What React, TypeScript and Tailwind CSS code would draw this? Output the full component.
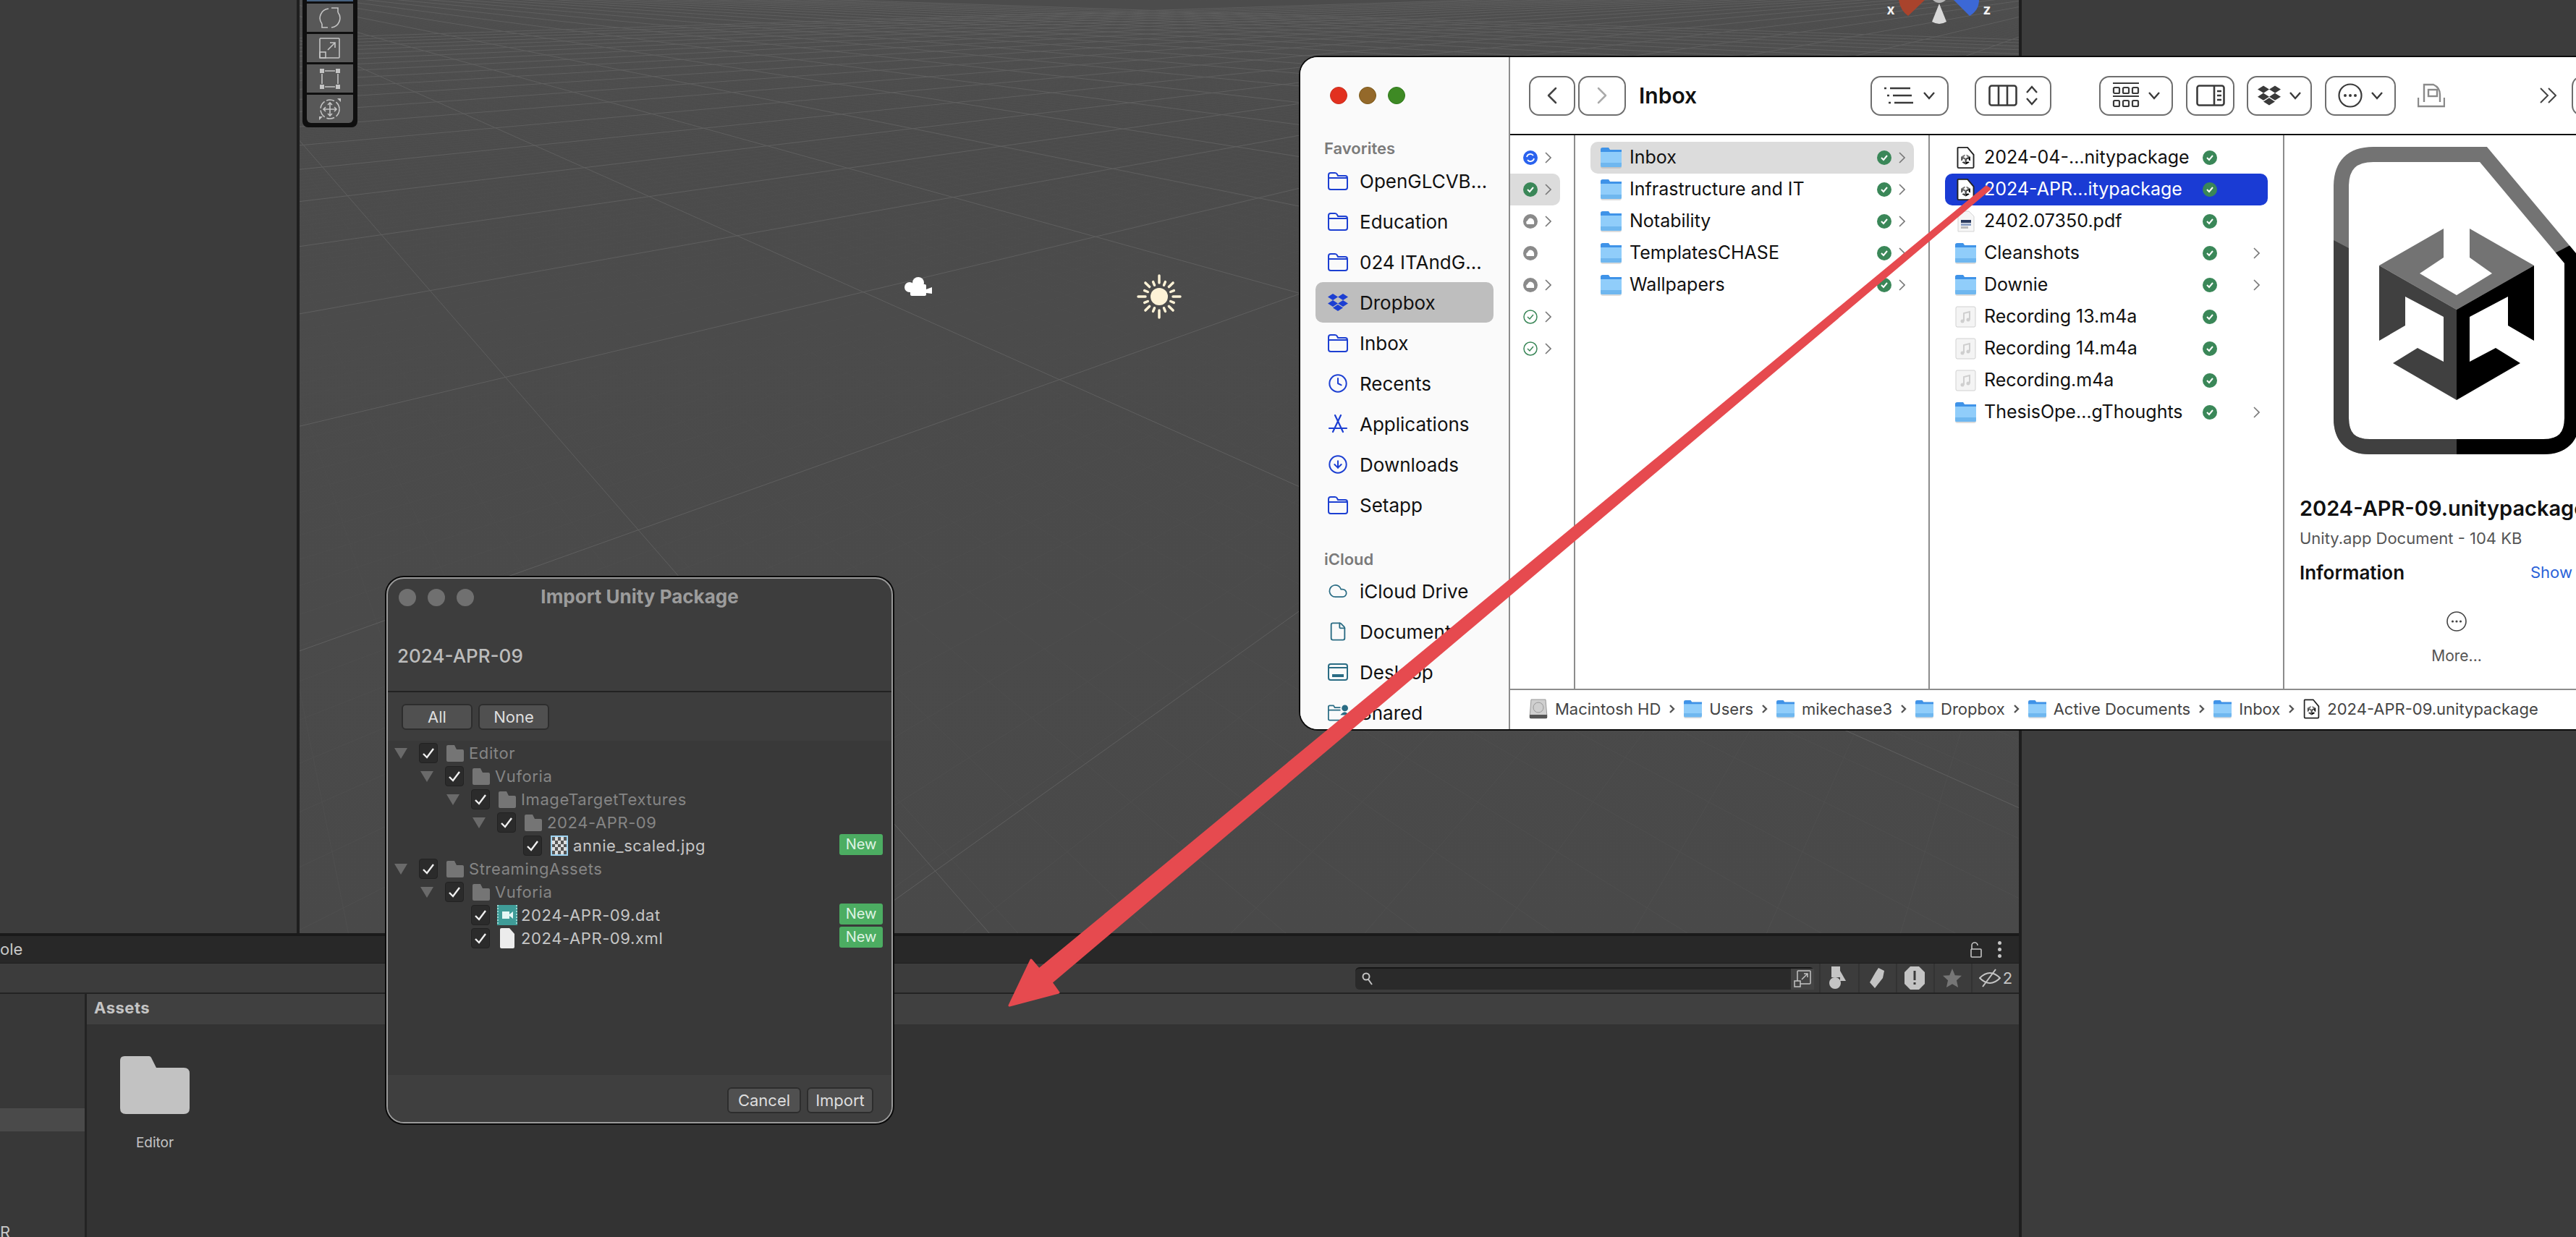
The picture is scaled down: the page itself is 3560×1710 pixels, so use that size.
import { ChevronLeft, ChevronRight, Clock, Cloud, CircleArrowDown, File as FileIcon } from "lucide-react";
import { FaDropbox } from "react-icons/fa";

const BLUE = "#1c3fd2";
const TEAL = "#2a6c84";

/* scene grid: both families of lines run to a vanishing point just above the top edge */
const VP_LEFT = 217;
const VP_RIGHT = 3023;
const VP_Y = -32;
const SCENE_BOTTOM = 1290;

function gridLines(start: number, step: number, count: number) {
  return Array.from({ length: count }, (_, i) => start + step * i);
}

function SceneGrid() {
  const minorA = gridLines(-1.2, 0.14, 200);
  const minorB = gridLines(-1.1, 0.14, 200);
  const majorA = gridLines(-1.87, 1.37, 24);
  const majorB = gridLines(-1.4, 1.4, 24);
  const h = SCENE_BOTTOM - VP_Y;
  return (
    <svg className="absolute inset-0" width="2376" height="1290" viewBox="414 0 2376 1290">
      <defs>
        <linearGradient id="fade" x1="0" y1="0" x2="0" y2="1" gradientUnits="objectBoundingBox">
          <stop offset="0" stopColor="#fff" stopOpacity="0.22" />
          <stop offset="0.35" stopColor="#fff" stopOpacity="0.1" />
          <stop offset="1" stopColor="#fff" stopOpacity="0.3" />
        </linearGradient>
        <mask id="minorMask" maskUnits="userSpaceOnUse" x="414" y="0" width="2376" height="1290">
          <rect x="414" y="0" width="2376" height="1290" fill="url(#fade)" />
        </mask>
      </defs>
      <g stroke="#5c5c5c" strokeWidth="1" mask="url(#minorMask)">
        {minorA.map((c) => (
          <line key={c} x1={VP_LEFT} y1={VP_Y} x2={VP_LEFT + c * h} y2={SCENE_BOTTOM} />
        ))}
        {minorB.map((c) => (
          <line key={c} x1={VP_RIGHT} y1={VP_Y} x2={VP_RIGHT - c * h} y2={SCENE_BOTTOM} />
        ))}
      </g>
      <g stroke="#5f5f5f" strokeWidth="1">
        {majorA.map((c) => (
          <line key={c} x1={VP_LEFT} y1={VP_Y} x2={VP_LEFT + c * h} y2={SCENE_BOTTOM} />
        ))}
        {majorB.map((c) => (
          <line key={c} x1={VP_RIGHT} y1={VP_Y} x2={VP_RIGHT - c * h} y2={SCENE_BOTTOM} />
        ))}
      </g>
      {/* camera gizmo */}
      <g fill="#ffffff">
        <circle cx="1257" cy="397" r="7" />
        <circle cx="1269" cy="391" r="8" />
        <rect x="1258" y="393" width="22" height="16" rx="2" />
        <polygon points="1280,400 1288,397 1288,406 1280,405" />
      </g>
      {/* directional light gizmo */}
      <g stroke="#fdf2d6" strokeLinecap="round" strokeWidth="3.5">
        {Array.from({ length: 16 }, (_, i) => {
          const a = (i * Math.PI) / 8;
          const long = i % 2 === 0;
          const r1 = long ? 19 : 17;
          const r2 = i % 4 === 0 ? 29 : i % 2 === 0 ? 27 : 22;
          return (
            <line
              key={i}
              x1={1602 + r1 * Math.cos(a)}
              y1={410 + r1 * Math.sin(a)}
              x2={1602 + r2 * Math.cos(a)}
              y2={410 + r2 * Math.sin(a)}
            />
          );
        })}
      </g>
      <circle cx="1602" cy="410" r="12" fill="#fdf2d6" />
      {/* orientation gizmo, cut by the top edge */}
      <path d="M2624 0 Q2626 14 2637 22 L2660 0 Z" fill="#a9432c" />
      <path d="M2700 0 L2722 22 Q2735 14 2735 0 Z" fill="#3c68d6" />
      <path d="M2680 5 L2670 30 Q2680 36 2690 30 Z" fill="#d8d8d8" />
      <path d="M2671 0 Q2680 8 2689 0 Z" fill="#b5b5b5" />
      <text x="2613" y="20" fill="#f2f2f2" fontSize="19" fontWeight="700" textAnchor="middle">x</text>
      <text x="2746" y="20" fill="#f2f2f2" fontSize="19" fontWeight="700" textAnchor="middle">z</text>
    </svg>
  );
}

function ToolIcon({ kind }: { kind: "rotate" | "scale" | "rect" | "all" }) {
  return (
    <svg width="32" height="32" viewBox="0 0 32 32" fill="none" stroke="#c4c4c4" strokeWidth="1.6">
      {kind === "rotate" && (
        <>
          <path d="M5 24 A13 13 0 0 1 14 3" />
          <path d="M27 8 A13 13 0 0 1 18 29" />
          <path d="M18 2 H27 V8 M5 24 V29 H13" />
        </>
      )}
      {kind === "scale" && (
        <>
          <rect x="2" y="2" width="27" height="27" rx="1" />
          <rect x="2" y="21" width="8" height="8" />
          <path d="M13 18 L23 8 M16 8 H23 V15" />
        </>
      )}
      {kind === "rect" && (
        <g>
          <path d="M9 5 H23 M9 27 H23 M5 9 V23 M27 9 V23" />
          <g fill="#c4c4c4" stroke="none">
            <rect x="2" y="2" width="6" height="6" />
            <rect x="24" y="2" width="6" height="6" />
            <rect x="2" y="24" width="6" height="6" />
            <rect x="24" y="24" width="6" height="6" />
          </g>
        </g>
      )}
      {kind === "all" && (
        <>
          <circle cx="16" cy="16" r="13" strokeDasharray="11 3" />
          <path d="M16 7 V25 M7 16 H25 M13 10 L16 7 L19 10 M13 22 L16 25 L19 22 M10 13 L7 16 L10 19 M22 13 L25 16 L22 19" />
          <path d="M26 1 H31 V6 Z M1 31 V26 H6 Z" fill="#c4c4c4" stroke="none" />
        </>
      )}
    </svg>
  );
}

function SceneToolbar() {
  const cell = "flex h-[39px] w-[64px] items-center justify-center bg-[#585858]";
  return (
    <div className="absolute left-[4px] top-0 flex w-[76px] flex-col gap-[3px] rounded-b-[8px] bg-[#0f0f0f] px-[6px] pb-[6px]">
      <div className="h-[2px] w-[64px] bg-[#46607f]" />
      <div className={cell}><ToolIcon kind="rotate" /></div>
      <div className={cell}><ToolIcon kind="scale" /></div>
      <div className={cell}><ToolIcon kind="rect" /></div>
      <div className={`${cell} rounded-b-[6px]`}><ToolIcon kind="all" /></div>
    </div>
  );
}

function BottomPanel() {
  const filter = "flex h-[40px] items-center justify-center border-l-2 border-[#333333]";
  return (
    <div className="flex h-[420px] flex-col">
      <div className="h-[4px] shrink-0 bg-[#1a1a1a]" />
      <div className="flex h-[38px] shrink-0 items-center border-b border-[#1e1e1e] bg-[#282828]">
        <span className="text-[22px] text-[#c8c8c8]">ole</span>
        <div className="ml-auto flex items-center gap-[22px] pr-[24px]">
          <svg width="16" height="22" viewBox="0 0 16 22" fill="none" stroke="#c4c4c4" strokeWidth="1.6">
            <path d="M2 10 V5 A4 4 0 0 1 10 5" />
            <rect x="1" y="10" width="14" height="11" rx="1" />
          </svg>
          <div className="flex flex-col gap-[4px]">
            <div className="h-[5px] w-[5px] rounded-full bg-[#c4c4c4]" />
            <div className="h-[5px] w-[5px] rounded-full bg-[#c4c4c4]" />
            <div className="h-[5px] w-[5px] rounded-full bg-[#c4c4c4]" />
          </div>
        </div>
      </div>
      <div className="flex h-[40px] shrink-0 items-center justify-end bg-[#3c3c3c]">
        <div className="flex h-[31px] w-[634px] items-center justify-between rounded-[6px] border-t-2 border-[#171717] bg-[#2a2a2a] pl-[9px]">
          <svg width="16" height="20" viewBox="0 0 16 20" fill="none" stroke="#c4c4c4" strokeWidth="2">
            <circle cx="6" cy="7" r="4.5" />
            <path d="M9 11 L14 18" />
          </svg>
          <div className="flex h-full w-[32px] items-center justify-center bg-[#444444]">
            <svg width="26" height="26" viewBox="0 0 26 26" fill="none" stroke="#c4c4c4" strokeWidth="1.5">
              <rect x="6" y="2" width="18" height="18" rx="1" />
              <rect x="2" y="16" width="8" height="8" fill="#444444" />
              <path d="M12 14 L20 6 M15 6 H20 V11" />
            </svg>
          </div>
        </div>
        <div className={`${filter} ml-[7px] w-[49px]`}>
          <svg width="26" height="32" viewBox="0 0 26 32" fill="#c4c4c4">
            <rect x="4" y="0" width="12" height="15" />
            <polygon points="16,6 24,20 16,20" />
            <circle cx="9" cy="23" r="8" />
          </svg>
        </div>
        <div className={`${filter} ml-[5px] w-[50px]`}>
          <svg width="20" height="28" viewBox="0 0 20 28" fill="#c4c4c4">
            <path d="M12 0 L20 4 L18 14 L7 28 L0 20 L8 6 Z" />
          </svg>
        </div>
        <div className={`${filter} ml-[2px] w-[50px]`}>
          <svg width="28" height="32" viewBox="0 0 28 32">
            <polygon points="8,0 20,0 28,8 28,24 20,32 8,32 0,24 0,8" fill="#c4c4c4" />
            <rect x="12.5" y="6" width="3" height="13" fill="#3c3c3c" />
            <rect x="12.5" y="22" width="3" height="3" fill="#3c3c3c" />
          </svg>
        </div>
        <div className={`${filter} ml-[2px] w-[50px]`}>
          <svg width="26" height="26" viewBox="0 0 24 24" fill="#767676">
            <polygon points="12,0 15.5,8.5 24,9 17.5,15 19.5,24 12,19.5 4.500,24 6.5,15 0,9 8.500,8.500" />
          </svg>
        </div>
        <div className={`${filter} ml-[2px] w-[66px] gap-[3px] text-[22px] text-[#c4c4c4]`}>
          <svg width="30" height="28" viewBox="0 0 30 28" fill="none" stroke="#c4c4c4" strokeWidth="2">
            <path d="M1 14 Q15 0 29 14 Q15 28 1 14 Z" />
            <path d="M5 26 L23 2" />
          </svg>
          <span>2</span>
        </div>
      </div>
      <div className="h-[2px] shrink-0 bg-[#232323]" />
      <div className="flex min-h-0 flex-1 overflow-hidden">
        <div className="flex w-[117px] flex-col overflow-hidden bg-[#383838] pt-[158px]">
          <div className="h-[32px] w-full shrink-0 bg-[#4a4a4a]" />
          <span className="mt-[123px] text-[22px] leading-[32px] text-[#c8c8c8]">R</span>
        </div>
        <div className="w-[3px] bg-[#232323]" />
        <div className="flex flex-1 flex-col bg-[#333333]">
          <div className="flex h-[42px] shrink-0 items-center bg-[#404040] pb-[3px] pl-[10px] text-[22px] font-bold tracking-[0.5px] text-[#c4c4c4]">
            Assets
          </div>
          <div className="flex w-[188px] flex-col items-center pt-[44px]">
            <svg width="96" height="80" viewBox="0 0 96 80">
              <path d="M6 0 H40 Q42 0 43 2 L50 16 H88 Q96 16 96 24 V72 Q96 80 88 80 H8 Q0 80 0 72 V6 Q0 0 6 0 Z" fill="#c2c2c2" />
            </svg>
            <div className="mt-[26px] text-[19px] text-[#c4c4c4]">Editor</div>
          </div>
        </div>
      </div>
    </div>
  );
}

function UnityEditor() {
  return (
    <div className="flex h-[1710px] w-[3560px]">
      <div className="flex w-[2790px] flex-col">
        <div className="flex h-[1290px] shrink-0">
          <div className="w-[410px] bg-[#3c3c3c]" />
          <div className="w-[4px] bg-[#1e1e1e]" />
          <div className="relative flex-1 overflow-hidden bg-gradient-to-b from-[#4c4c4c] to-[#494949]">
            <SceneGrid />
            <SceneToolbar />
          </div>
        </div>
        <BottomPanel />
      </div>
      <div className="w-[4px] bg-[#1e1e1e]" />
      <div className="flex-1 bg-[#3c3c3c]" />
    </div>
  );
}

/* ---------- Finder ---------- */

function SideFolder({ color = BLUE }: { color?: string }) {
  return (
    <svg width="28" height="25" viewBox="0 0 28 25" fill="none" stroke={color} strokeWidth="2">
      <path d="M1 4 Q1 1 4 1 H10 Q12 1 13 3 L14 5 H24 Q27 5 27 8 V21 Q27 24 24 24 H4 Q1 24 1 21 Z" />
      <path d="M1 8 H27" />
    </svg>
  );
}

function SideIcon({ name }: { name: string }) {
  if (name === "dropbox") return <FaDropbox size={28} color={BLUE} />;
  if (name === "clock") return <Clock size={28} color={BLUE} strokeWidth={1.7} />;
  if (name === "down") return <CircleArrowDown size={28} color={BLUE} strokeWidth={1.7} />;
  if (name === "apps")
    return (
      <svg width="28" height="26" viewBox="0 0 28 26" fill="none" stroke={BLUE} strokeWidth="2.2" strokeLinecap="round">
        <path d="M10 1 L21 24 M18 1 L7 24 M2 19 H26" />
      </svg>
    );
  if (name === "cloud") return <Cloud size={32} color={TEAL} strokeWidth={1.5} />;
  if (name === "doc") return <FileIcon size={30} color={TEAL} strokeWidth={1.6} />;
  if (name === "desk")
    return (
      <svg width="28" height="24" viewBox="0 0 28 24" fill="none" stroke={TEAL} strokeWidth="2">
        <rect x="1" y="1" width="26" height="22" rx="3" />
        <path d="M1 6 H27" />
        <rect x="6" y="15" width="16" height="4" fill={TEAL} stroke="none" />
      </svg>
    );
  if (name === "shared")
    return (
      <svg width="32" height="26" viewBox="0 0 32 26" fill="none" stroke={TEAL} strokeWidth="2">
        <path d="M1 4 Q1 2 3 2 H9 L11 5 H20 M1 9 H20 M1 4 V23 Q1 25 3 25 H24" />
        <circle cx="27" cy="6" r="4" fill={TEAL} />
        <path d="M22 16 Q27 10 31 16 Z" fill={TEAL} />
      </svg>
    );
  return <SideFolder />;
}

function SideRow({ icon, label, active }: { icon: string; label: string; active?: boolean }) {
  return (
    <div className={`mx-[21px] flex h-[56px] items-center gap-[16px] rounded-[10px] pl-[17px] ${active ? "bg-[#bebebe]" : ""}`}>
      <div className="flex w-[28px] shrink-0 justify-center">
        <SideIcon name={icon} />
      </div>
      <span className="whitespace-nowrap">{label}</span>
    </div>
  );
}

function Sidebar() {
  const favorites: [string, string][] = [
    ["folder", "OpenGLCVB…"],
    ["folder", "Education"],
    ["folder", "024 ITAndG…"],
    ["dropbox", "Dropbox"],
    ["folder", "Inbox"],
    ["clock", "Recents"],
    ["apps", "Applications"],
    ["down", "Downloads"],
    ["folder", "Setapp"],
  ];
  const cloud: [string, string][] = [
    ["cloud", "iCloud Drive"],
    ["doc", "Documents"],
    ["desk", "Desktop"],
    ["shared", "Shared"],
  ];
  return (
    <div className="w-[290px] shrink-0 border-r-2 border-[#8c8c8c] bg-[#fafafa] text-[26px] text-[#111]">
      <div className="flex gap-[16px] pl-[41px] pt-[41px]">
        <div className="h-[24px] w-[24px] rounded-full border border-[#c9301f] bg-[#e2301f]" />
        <div className="h-[24px] w-[24px] rounded-full border border-[#7c5a1a] bg-[#94692a]" />
        <div className="h-[24px] w-[24px] rounded-full border border-[#2f7a1c] bg-[#3e8a24]" />
      </div>
      <div className="mt-[46px] flex h-[30px] items-center pl-[33px] text-[22px] font-semibold text-[#7a7a7a]">Favorites</div>
      <div className="mt-[2px]">
        {favorites.map(([icon, label]) => (
          <SideRow key={label} icon={icon} label={label} active={label === "Dropbox"} />
        ))}
      </div>
      <div className="mt-[32px] flex h-[30px] items-center pl-[33px] text-[22px] font-semibold text-[#7a7a7a]">iCloud</div>
      <div className="mt-[1px]">
        {cloud.map(([icon, label]) => (
          <SideRow key={label} icon={icon} label={label} />
        ))}
      </div>
    </div>
  );
}

function ToolButton({ w, children }: { w: string; children: React.ReactNode }) {
  return (
    <div className={`flex h-[55px] shrink-0 items-center justify-center gap-[12px] rounded-[14px] border-2 border-[#6e6e6e] ${w}`}>
      {children}
    </div>
  );
}

function DownCaret() {
  return (
    <svg width="16" height="12" viewBox="0 0 16 12" fill="none" stroke="#3a3a3a" strokeWidth="2.4">
      <path d="M1 2 L8 10 L15 2" />
    </svg>
  );
}

function Toolbar() {
  return (
    <div className="flex h-[108px] shrink-0 items-center border-b-2 border-[#111] pl-[26px] text-[#333]">
      <ToolButton w="w-[64px]"><ChevronLeft size={40} color="#444" strokeWidth={1.5} /></ToolButton>
      <div className="ml-[4px] shrink-0">
        <ToolButton w="w-[66px]"><ChevronRight size={40} color="#aaa" strokeWidth={1.5} /></ToolButton>
      </div>
      <div className="ml-[18px] w-[320px] shrink-0 text-[30px] font-semibold text-[#111]">Inbox</div>
      <ToolButton w="w-[108px]">
        <svg width="42" height="26" viewBox="0 0 42 26" fill="none" stroke="#3a3a3a" strokeWidth="2.6">
          <path d="M8 3 H36 M12 13 H38 M14 23 H40 M0 3 H3 M4 13 H7 M6 23 H9" />
        </svg>
        <DownCaret />
      </ToolButton>
      <div className="ml-[36px] shrink-0">
        <ToolButton w="w-[106px]">
          <svg width="40" height="30" viewBox="0 0 40 30" fill="none" stroke="#3a3a3a" strokeWidth="2.6">
            <rect x="1.500" y="1.500" width="37" height="27" rx="3" />
            <path d="M14 1 V29 M26 1 V29" />
          </svg>
          <svg width="16" height="28" viewBox="0 0 16 28" fill="none" stroke="#3a3a3a" strokeWidth="2.4">
            <path d="M1 10 L8 2 L15 10 M1 18 L8 26 L15 18" />
          </svg>
        </ToolButton>
      </div>
      <div className="ml-[66px] shrink-0">
        <ToolButton w="w-[102px]">
          <svg width="38" height="36" viewBox="0 0 38 36" fill="none" stroke="#3a3a3a" strokeWidth="2.2">
            <path d="M1 1 H37 M1 19 H37" />
            <rect x="2" y="7" width="8" height="8" rx="1.500" />
            <rect x="15" y="7" width="8" height="8" rx="1.500" />
            <rect x="28" y="7" width="8" height="8" rx="1.500" />
            <rect x="2" y="25" width="8" height="8" rx="1.500" />
            <rect x="15" y="25" width="8" height="8" rx="1.500" />
            <rect x="28" y="25" width="8" height="8" rx="1.500" />
          </svg>
          <DownCaret />
        </ToolButton>
      </div>
      <div className="ml-[18px] shrink-0">
        <ToolButton w="w-[67px]">
          <svg width="40" height="30" viewBox="0 0 40 30" fill="none" stroke="#3a3a3a" strokeWidth="2.6">
            <rect x="1.500" y="1.500" width="37" height="27" rx="3" />
            <path d="M25 1 V29 M29 9 H35 M29 15 H35 M29 21 H35" />
          </svg>
        </ToolButton>
      </div>
      <div className="ml-[17px] shrink-0">
        <ToolButton w="w-[90px]">
          <FaDropbox size={32} color="#3a3a3a" />
          <DownCaret />
        </ToolButton>
      </div>
      <div className="ml-[18px] shrink-0">
        <ToolButton w="w-[98px]">
          <svg width="34" height="34" viewBox="0 0 34 34" fill="none" stroke="#3a3a3a" strokeWidth="2.2">
            <circle cx="17" cy="17" r="15.500" />
            <g fill="#3a3a3a" stroke="none">
              <circle cx="10" cy="17" r="2" />
              <circle cx="17" cy="17" r="2" />
              <circle cx="24" cy="17" r="2" />
            </g>
          </svg>
          <DownCaret />
        </ToolButton>
      </div>
      <svg className="ml-[30px] shrink-0" width="38" height="34" viewBox="0 0 38 34" fill="none" stroke="#8a8a8a" strokeWidth="2.4">
        <path d="M1 20 V32 H37 V20" />
        <path d="M9 26 V2 H22 Q31 6 31 16 V26" />
        <rect x="15" y="9" width="12" height="9" />
      </svg>
      <svg className="ml-[131px] shrink-0" width="23" height="22" viewBox="0 0 23 22" fill="none" stroke="#444" strokeWidth="2">
        <path d="M1 1 L11 11 L1 21 M12 1 L22 11 L12 21" />
      </svg>
      <div className="ml-[21px] shrink-0">
        <ToolButton w="w-[60px]"><span /></ToolButton>
      </div>
    </div>
  );
}

function MacFolder({ size = 29, glyph }: { size?: number; glyph?: React.ReactNode }) {
  return (
    <svg width={size} height={size} viewBox="0 0 29 29" className="shrink-0">
      <path d="M0 3 Q0 0 3 0 H11 L13 3 H29 V26 Q29 29 26 29 H3 Q0 29 0 26 Z" fill="#9a9a9a" opacity="0.35" />
      <path d="M0 2.500 Q0 0 3 0 H11 L13 3 H29 V12 H0 Z" fill="#3f93e8" />
      <path d="M0 6 H29 V25 Q29 27 27 27 H2 Q0 27 0 25 Z" fill="#90cdfa" />
      <path d="M0 21 H29 V25 Q29 27 27 27 H2 Q0 27 0 25 Z" fill="#6fb7ef" />
      {glyph}
    </svg>
  );
}

function UnityDoc({ w = 25, h = 32 }: { w?: number; h?: number }) {
  return (
    <svg width={w} height={h} viewBox="0 0 340 425" className="shrink-0">
      <path d="M30 20 H205 L320 157 V385 Q320 405 300 405 H40 Q20 405 20 385 V30 Q20 20 30 20 Z" fill="#fff" stroke="#222" strokeWidth="26" />
      <g transform="translate(35 60) scale(0.8)">
        <UnityMark />
      </g>
    </svg>
  );
}

function UnityMark() {
  return (
    <>
      <polygon fill="#737373" points="152,113 152,153 119,175 170,205 219,175 188,153 188,113 277,164 170,225 63,164" />
      <polygon fill="#404040" points="63,164 170,225 170,350 82,299 116,278 152,297 152,235 99,207 99,247 63,268" />
      <polygon fill="#000000" points="277,164 170,225 170,350 258,299 224,278 188,297 188,235 241,207 241,247 277,268" />
    </>
  );
}

function PdfDoc() {
  return (
    <svg width="24" height="30" viewBox="0 0 24 30" className="shrink-0">
      <path d="M1 1 H16 L23 8 V29 H1 Z" fill="#f6f6f6" stroke="#d4d4d4" />
      <rect x="5" y="13" width="14" height="4" fill="#2b3a5e" />
      <rect x="5" y="18" width="14" height="3" fill="#8da0c4" />
      <rect x="5" y="22" width="10" height="3" fill="#bbbbbb" />
    </svg>
  );
}

function AudioDoc() {
  return (
    <svg width="29" height="30" viewBox="0 0 29 30" className="shrink-0">
      <rect x="1" y="1" width="27" height="28" rx="2" fill="#f4f4f4" stroke="#d0d0d0" />
      <path d="M12 21 V10 L20 8 V19" fill="none" stroke="#cfcfcf" strokeWidth="2" />
      <circle cx="10" cy="21" r="2.500" fill="#cfcfcf" />
      <circle cx="18" cy="19" r="2.500" fill="#cfcfcf" />
    </svg>
  );
}

function StatusIcon({ kind }: { kind: "done" | "sync" | "cloud" | "outline" }) {
  if (kind === "sync")
    return (
      <svg width="20" height="20" viewBox="0 0 20 20" className="shrink-0">
        <circle cx="10" cy="10" r="10" fill="#2a62ee" />
        <path d="M5 9 A5 5 0 0 1 14 7 M15 11 A5 5 0 0 1 6 13" fill="none" stroke="#fff" strokeWidth="1.800" />
      </svg>
    );
  if (kind === "cloud")
    return (
      <svg width="20" height="20" viewBox="0 0 20 20" className="shrink-0">
        <circle cx="10" cy="10" r="10" fill="#8a8a8a" />
        <path d="M5 14 Q3 10 6 9 Q8 4 12 6 Q16 8 15 14 Z" fill="#fff" />
      </svg>
    );
  if (kind === "outline")
    return (
      <svg width="20" height="20" viewBox="0 0 20 20" fill="none" className="shrink-0">
        <circle cx="10" cy="10" r="9" stroke="#3a8758" strokeWidth="1.500" />
        <path d="M6 10 L9 13 L14 7" stroke="#3a8758" strokeWidth="1.500" />
      </svg>
    );
  return (
    <svg width="20" height="20" viewBox="0 0 20 20" fill="none" className="shrink-0">
      <circle cx="10" cy="10" r="10" fill="#3a8758" />
      <path d="M6 10 L9 13 L14 7" stroke="#fff" strokeWidth="2" />
    </svg>
  );
}

function RowChevron({ hidden }: { hidden?: boolean }) {
  return (
    <svg width="9" height="20" viewBox="0 0 9 20" fill="none" stroke="#777" strokeWidth="1.600" className={`shrink-0 ${hidden ? "invisible" : ""}`}>
      <path d="M1 3 L8 10 L1 17" />
    </svg>
  );
}

function ParentColumn() {
  const kinds: ("sync" | "done" | "cloud" | "outline")[] = ["sync", "done", "cloud", "cloud", "cloud", "outline", "outline"];
  return (
    <div className="w-[90px] shrink-0 border-r-2 border-[#8c8c8c] pt-[9px]">
      {kinds.map((k, i) => (
        <div key={i} className={`flex h-[44px] w-[69px] items-center gap-[10px] rounded-r-[10px] pl-[18px] ${i === 1 ? "bg-[#dcdcdc]" : ""}`}>
          <StatusIcon kind={k} />
          <RowChevron hidden={i === 3} />
        </div>
      ))}
    </div>
  );
}

function InboxColumn() {
  const names = ["Inbox", "Infrastructure and IT", "Notability", "TemplatesCHASE", "Wallpapers"];
  return (
    <div className="w-[490px] shrink-0 border-r-2 border-[#8c8c8c] pl-[21px] pt-[9px] text-[25px] text-[#111]">
      {names.map((n, i) => (
        <div key={n} className={`flex h-[44px] w-[447px] items-center rounded-[10px] pl-[14px] pr-[12px] ${i === 0 ? "bg-[#dcdcdc]" : ""}`}>
          <MacFolder />
          <span className="ml-[11px] flex-1 whitespace-nowrap">{n}</span>
          <StatusIcon kind="done" />
          <div className="ml-[10px]"><RowChevron /></div>
        </div>
      ))}
    </div>
  );
}

function FileColumn() {
  const rows: { n: string; t: "unity" | "pdf" | "dir" | "audio" }[] = [
    { n: "2024-04-…nitypackage", t: "unity" },
    { n: "2024-APR…itypackage", t: "unity" },
    { n: "2402.07350.pdf", t: "pdf" },
    { n: "Cleanshots", t: "dir" },
    { n: "Downie", t: "dir" },
    { n: "Recording 13.m4a", t: "audio" },
    { n: "Recording 14.m4a", t: "audio" },
    { n: "Recording.m4a", t: "audio" },
    { n: "ThesisOpe…gThoughts", t: "dir" },
  ];
  return (
    <div className="w-[490px] shrink-0 border-r-2 border-[#8c8c8c] pl-[21px] pt-[9px] text-[25px] text-[#111]">
      {rows.map((r, i) => (
        <div key={r.n} className={`flex h-[44px] w-[446px] items-center rounded-[10px] pl-[14px] pr-[12px] ${i === 1 ? "bg-[#1a3bd4] text-white" : ""}`}>
          <div className="flex w-[29px] shrink-0 justify-center">
            {r.t === "unity" && <UnityDoc />}
            {r.t === "pdf" && <PdfDoc />}
            {r.t === "dir" && <MacFolder />}
            {r.t === "audio" && <AudioDoc />}
          </div>
          <span className="ml-[11px] w-[302px] shrink-0 whitespace-nowrap">{r.n}</span>
          <StatusIcon kind="done" />
          <div className="ml-[50px]"><RowChevron hidden={r.t !== "dir"} /></div>
        </div>
      ))}
    </div>
  );
}

const DOC_OUTLINE = "M10.500 55 Q10.500 10.500 55 10.500 H207 L329.500 157 V375 Q329.500 414.500 290 414.500 H50 Q10.500 414.500 10.500 375 Z";

function PreviewPane() {
  return (
    <div className="w-[476px] shrink-0">
      <svg className="ml-[68px] mt-[16px]" width="340" height="425" viewBox="0 0 340 425" fill="none">
        <defs>
          <clipPath id="bodyLeft"><polygon points="0,129 40,150 170,150 170,425 0,425" /></clipPath>
          <clipPath id="bodyRight"><polygon points="340,129 300,150 170,150 170,425 340,425" /></clipPath>
        </defs>
        <path d={DOC_OUTLINE} fill="#fff" stroke="#737373" strokeWidth="21" />
        <path d={DOC_OUTLINE} stroke="#404040" strokeWidth="21" clipPath="url(#bodyLeft)" />
        <path d={DOC_OUTLINE} stroke="#000" strokeWidth="21" clipPath="url(#bodyRight)" />
        <UnityMark />
      </svg>
      <div className="ml-[21px] mt-[58px] flex h-[34px] items-center whitespace-nowrap text-[29px] font-semibold text-[#111]">2024-APR-09.unitypackage</div>
      <div className="ml-[21px] mt-[9px] flex h-[30px] items-center whitespace-nowrap text-[22px] text-[#555]">Unity.app Document - 104 KB</div>
      <div className="ml-[21px] mt-[17px] flex h-[30px] items-center text-[26px] font-semibold text-[#111]">
        <span className="w-[319px]">Information</span>
        <span className="text-[22px] font-normal text-[#2a62d8]">Show</span>
      </div>
      <div className="ml-[224px] mt-[39px]">
        <svg width="28" height="28" viewBox="0 0 28 28" fill="none" stroke="#444" strokeWidth="1.600">
          <circle cx="14" cy="14" r="13" />
          <g fill="#444" stroke="none">
            <circle cx="8.500" cy="14" r="1.600" />
            <circle cx="14" cy="14" r="1.600" />
            <circle cx="19.500" cy="14" r="1.600" />
          </g>
        </svg>
      </div>
      <div className="mt-[18px] flex h-[28px] w-[476px] justify-center text-[21px] text-[#555]">More...</div>
    </div>
  );
}

function Crumb({ icon, label }: { icon: React.ReactNode; label: string }) {
  return (
    <div className="flex shrink-0 items-center gap-[10px]">
      {icon}
      <span className="whitespace-nowrap">{label}</span>
    </div>
  );
}

function CrumbSep() {
  return (
    <svg width="8" height="14" viewBox="0 0 8 14" fill="none" stroke="#555" strokeWidth="2.400" className="mx-[12px] shrink-0">
      <path d="M1 2 L6 7 L1 12" />
    </svg>
  );
}

function PathBar() {
  return (
    <div className="flex h-[56px] items-center border-t-2 border-[#8c8c8c] pb-[2px] pl-[26px] text-[22px] text-[#444]">
      <Crumb
        label="Macintosh HD"
        icon={
          <svg width="26" height="28" viewBox="0 0 26 28" className="shrink-0">
            <path d="M3 1 H23 L25 25 Q25 27 23 27 H3 Q1 27 1 25 Z" fill="#cfcfcf" stroke="#999" />
            <circle cx="13" cy="12" r="7" fill="none" stroke="#999" />
            <rect x="1" y="22" width="24" height="5" fill="#555" />
          </svg>
        }
      />
      <CrumbSep />
      <Crumb label="Users" icon={<MacFolder size={25} />} />
      <CrumbSep />
      <Crumb label="mikechase3" icon={<MacFolder size={25} />} />
      <CrumbSep />
      <Crumb label="Dropbox" icon={<MacFolder size={25} />} />
      <CrumbSep />
      <Crumb label="Active Documents" icon={<MacFolder size={25} />} />
      <CrumbSep />
      <Crumb label="Inbox" icon={<MacFolder size={25} />} />
      <CrumbSep />
      <Crumb label="2024-APR-09.unitypackage" icon={<UnityDoc w={23} h={28} />} />
    </div>
  );
}

function FinderWindow() {
  return (
    <div className="absolute left-[1797px] top-[79px] flex h-[929px] w-[1800px] overflow-hidden rounded-l-[24px] bg-white shadow-[0_0_0_2px_#0c0c0c]">
      <Sidebar />
      <div className="flex min-w-0 flex-1 flex-col">
        <Toolbar />
        <div className="flex h-[765px] shrink-0">
          <ParentColumn />
          <InboxColumn />
          <FileColumn />
          <PreviewPane />
        </div>
        <PathBar />
      </div>
    </div>
  );
}

/* ---------- Import dialog ---------- */

function DialogButton({ w, children }: { w: string; children: React.ReactNode }) {
  return (
    <div className={`flex h-[36px] items-center justify-center rounded-[6px] border-2 border-[#2d2d2d] bg-[#505050] text-[22px] text-[#dedede] ${w}`}>
      {children}
    </div>
  );
}

function TreeRow({
  level,
  label,
  kind,
  isNew,
}: {
  level: number;
  label: string;
  kind: "folder" | "image" | "video" | "file";
  isNew?: boolean;
}) {
  const isFolder = kind === "folder";
  return (
    <div className="flex h-[32px] items-center pl-[9px] text-[22px]">
      <div className="shrink-0" style={{ width: level * 36 }} />
      <svg width="18" height="15" viewBox="0 0 18 15" className={`shrink-0 ${isFolder ? "" : "invisible"}`}>
        <polygon points="0,0 18,0 9,15" fill="#6a6a6a" />
      </svg>
      <div className="ml-[16px] flex h-[28px] w-[26px] shrink-0 items-center justify-center rounded-[4px] border border-[#222] bg-[#2b2b2b]">
        <svg width="18" height="16" viewBox="0 0 18 16" fill="none" stroke="#f0f0f0" strokeWidth="2.400">
          <path d="M2 9 L7 14 L16 2" />
        </svg>
      </div>
      <div className="ml-[12px] flex w-[24px] shrink-0 justify-center">
        {isFolder && (
          <svg width="24" height="23" viewBox="0 0 24 23" className="shrink-0">
            <path d="M0 2 Q0 0 2 0 H11 L14 6 H22 Q24 6 24 8 V21 Q24 23 22 23 H2 Q0 23 0 21 Z" fill="#757575" />
          </svg>
        )}
        {kind === "image" && (
          <div className="grid h-[28px] w-[24px] shrink-0 grid-cols-5 grid-rows-5 border-2 border-[#9ed2f0] bg-white">
            {Array.from({ length: 25 }, (_, i) => (
              <div key={i} className={i % 2 === 0 ? "bg-[#555]" : "bg-[#ddd]"} />
            ))}
          </div>
        )}
        {kind === "video" && (
          <svg width="28" height="28" viewBox="0 0 28 28" className="shrink-0">
            <rect width="28" height="28" fill="#3f9c98" />
            <rect x="7" y="9" width="10" height="10" fill="#e4f7f5" />
            <polygon points="17,13 22,9 22,19 17,15" fill="#e4f7f5" />
            <path d="M1 0 V28 M27 0 V28" stroke="#b9ece8" strokeWidth="1.500" strokeDasharray="2 2" />
          </svg>
        )}
        {kind === "file" && (
          <svg width="20" height="28" viewBox="0 0 20 28" className="shrink-0">
            <path d="M2 0 H13 L20 8 V26 Q20 28 18 28 H2 Q0 28 0 26 V2 Q0 0 2 0 Z" fill="#ececec" />
          </svg>
        )}
      </div>
      <span className={`ml-[7px] whitespace-nowrap tracking-[0.6px] ${isFolder ? "text-[#858585]" : "text-[#c6c6c6]"}`}>{label}</span>
      {isNew && (
        <div className="mb-[4px] ml-auto mr-[12px] flex h-[29px] w-[60px] items-center justify-center rounded-[3px] bg-[#4cad62] text-[20px] leading-none text-[#dff3e3]">
          New
        </div>
      )}
    </div>
  );
}

function ImportDialog() {
  return (
    <div className="absolute left-[534px] top-[798px] flex h-[755px] w-[700px] flex-col overflow-hidden rounded-[24px] border-2 border-[#9a9a9a] bg-[#3d3d3d] shadow-[0_0_0_2px_#0a0a0a]">
      <div className="relative flex h-[52px] shrink-0 items-center justify-center">
        <div className="absolute left-[15px] flex gap-[16px]">
          <div className="h-[24px] w-[24px] rounded-full bg-[#707070]" />
          <div className="h-[24px] w-[24px] rounded-full bg-[#707070]" />
          <div className="h-[24px] w-[24px] rounded-full bg-[#707070]" />
        </div>
        <span className="pb-[4px] text-[26px] font-bold text-[#9c9c9c]">Import Unity Package</span>
      </div>
      <div className="flex h-[105px] shrink-0 items-center border-b-2 border-[#222] pl-[13px] pt-[5px] text-[26px] font-medium text-[#bcbcbc]">
        2024-APR-09
      </div>
      <div className="flex h-[67px] shrink-0 gap-[8px] bg-[#3d3d3d] pl-[19px] pt-[16px]">
        <DialogButton w="w-[98px]">All</DialogButton>
        <DialogButton w="w-[98px]">None</DialogButton>
      </div>
      <div className="flex-1 bg-[#393939] pt-[1px]">
        <TreeRow level={0} label="Editor" kind="folder" />
        <TreeRow level={1} label="Vuforia" kind="folder" />
        <TreeRow level={2} label="ImageTargetTextures" kind="folder" />
        <TreeRow level={3} label="2024-APR-09" kind="folder" />
        <TreeRow level={4} label="annie_scaled.jpg" kind="image" isNew />
        <TreeRow level={0} label="StreamingAssets" kind="folder" />
        <TreeRow level={1} label="Vuforia" kind="folder" />
        <TreeRow level={2} label="2024-APR-09.dat" kind="video" isNew />
        <TreeRow level={2} label="2024-APR-09.xml" kind="file" isNew />
      </div>
      <div className="flex h-[65px] shrink-0 justify-end gap-[8px] bg-[#3f3f3f] pr-[25px] pt-[17px]">
        <DialogButton w="w-[102px]">Cancel</DialogButton>
        <DialogButton w="w-[92px]">Import</DialogButton>
      </div>
    </div>
  );
}

function RedArrow() {
  return (
    <svg className="pointer-events-none absolute inset-0" width="3560" height="1710" viewBox="0 0 3560 1710">
      <polygon
        points="2745,258 2750,261 1453,1358 1463,1372 1395,1390 1425,1327 1436,1340"
        fill="#e64a4f"
        stroke="#e64a4f"
        strokeWidth="3"
        strokeLinejoin="round"
      />
    </svg>
  );
}

export default function App() {
  return (
    <div className="relative h-[1710px] w-[3560px] overflow-hidden bg-[#383838] font-[Inter,sans-serif]">
      <UnityEditor />
      <FinderWindow />
      <ImportDialog />
      <RedArrow />
    </div>
  );
}
